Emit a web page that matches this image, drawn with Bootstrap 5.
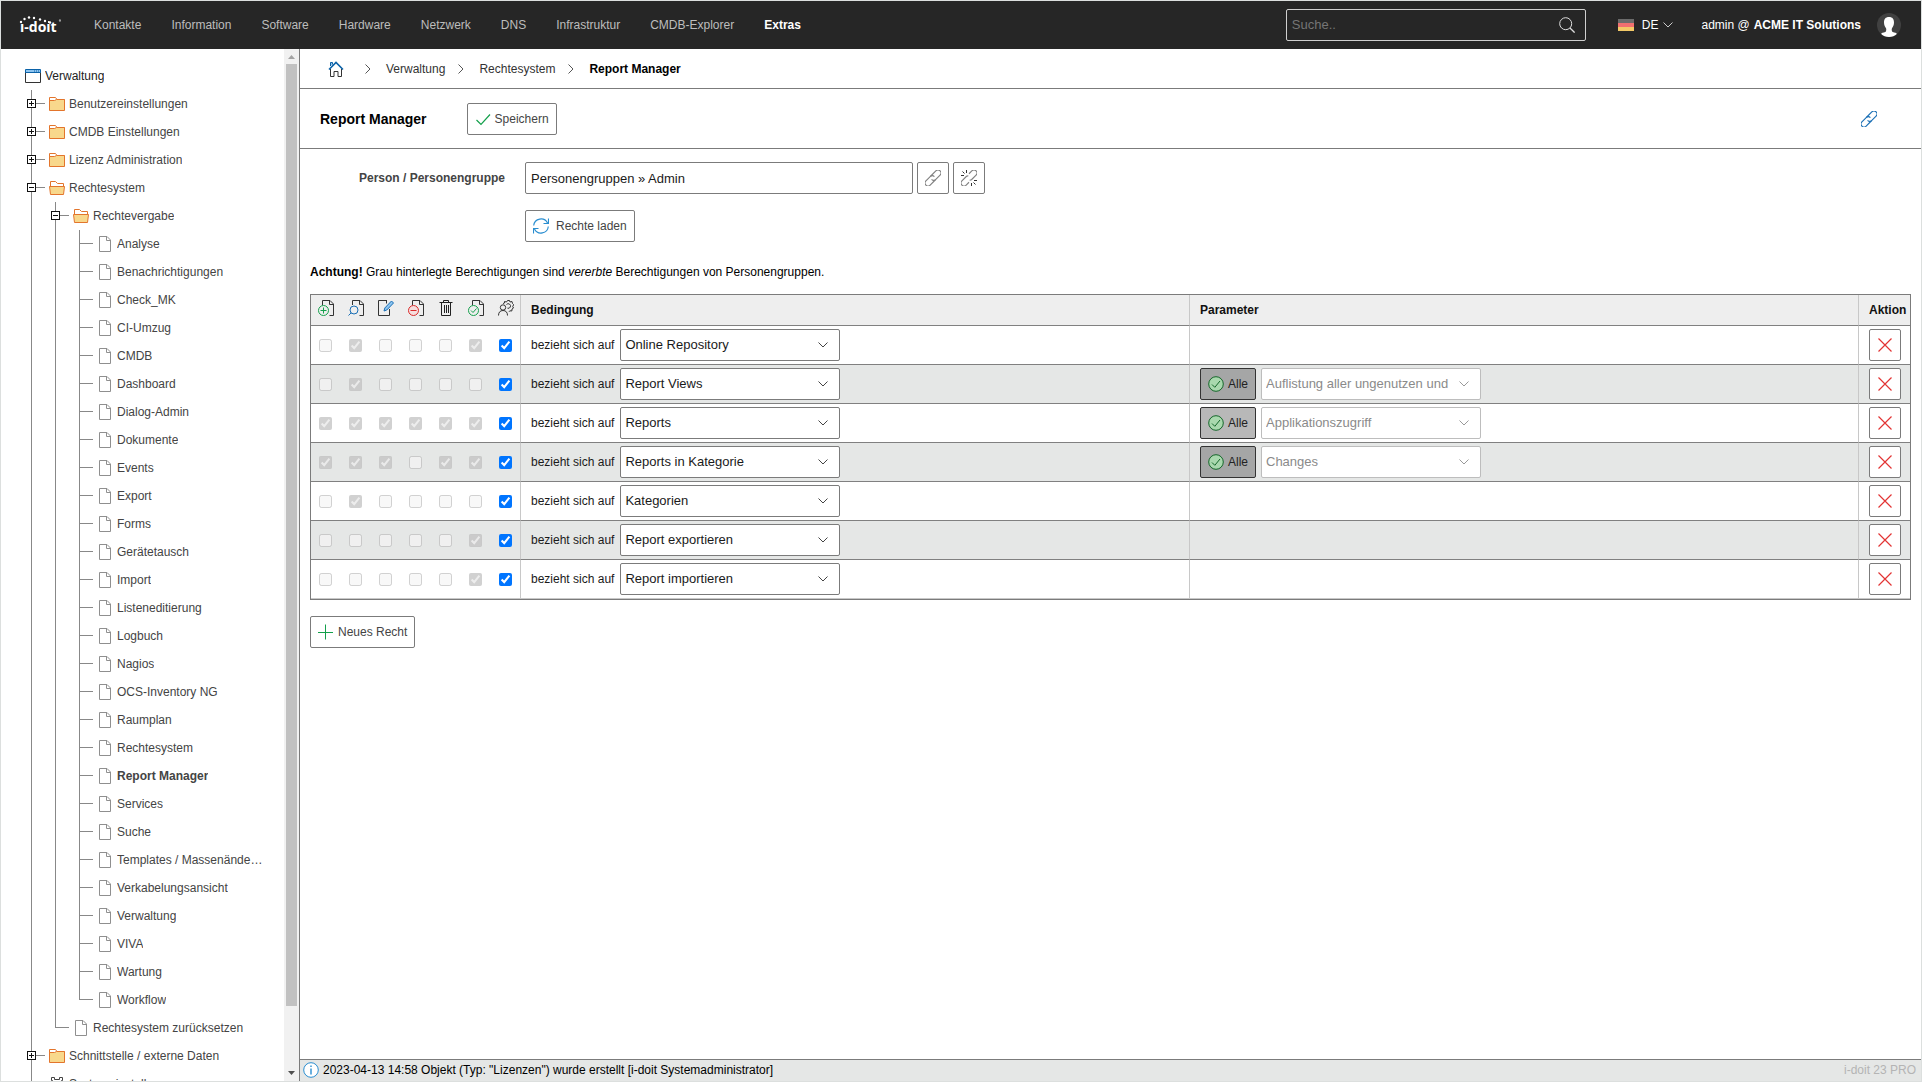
<!DOCTYPE html>
<html lang="de">
<head>
<meta charset="utf-8">
<meta name="viewport" content="width=device-width, initial-scale=1">
<title>i-doit – Report Manager</title>
<link href="https://cdn.jsdelivr.net/npm/bootstrap@5.3.0/dist/css/bootstrap.min.css" rel="stylesheet">
<style>
:root{--line:#7b7b7b;--soft:#c8c8c8}
body{font-family:"Liberation Sans",Arial,sans-serif;font-size:12px;line-height:16px;color:#1a1a1a;border:1px solid #dcdfde}
a{color:inherit;text-decoration:none}
svg{flex:none;display:block;fill:none}
.topbar{height:48px;background:#262626;color:#bdbdbd}
.topbar .nav-link{padding:16px 15px;color:#bdbdbd}
.topbar .nav-link.active{color:#fff;font-weight:700}
.brand{padding-left:14px;width:78px}
.searchbox{width:300px;height:32px;border:1px solid #d0d0d0;border-radius:2px;padding:0 10px 0 5px}
.searchbox input{background:none;border:0;outline:0;padding:0;color:#fff;font-size:13px}
.searchbox input::placeholder{color:#757575}
.bare{background:none;border:0;padding:0;color:inherit}
.lang{margin-left:32px;color:#fff}
.account{margin:0 20px 0 27px;color:#fff}
.sidebar{width:299px;border-right:1px solid var(--line)}
.tree{padding:13px 18px 0 24px;color:#444;white-space:nowrap}
.tree ul{list-style:none;margin:0;padding:0}
.tree ul ul{padding-left:24px}
.tree li{background:linear-gradient(#888,#888) 6px 0/1px 100% no-repeat}
.tree ul ul>li:last-child{background-size:1px 14px}
.node{height:28px;display:flex;align-items:center;gap:4px;min-width:0}
.node>a{overflow:hidden;text-overflow:ellipsis}
.node>svg{margin-top:-1px}
.root{color:#222}
.joint{width:24px;height:28px;margin-right:-4px;flex:none;background:linear-gradient(#888,#888) 7px 13px/13px 1px no-repeat;padding:9px 0 0 2px}
.toggle{display:block;width:9px;height:9px;border:1px solid #111;padding:0;background:linear-gradient(#111,#111) center/5px 1px no-repeat,#fff}
.plus{background:linear-gradient(#111,#111) center/5px 1px no-repeat,linear-gradient(#111,#111) center/1px 5px no-repeat,#fff}
.scroller{width:15px;background:#f1f1f1;padding:0 2px}
.scroller svg{height:15px}
.thumb{background:#c1c1c1;flex:94 0 0}
.rest{flex:6 0 0}
.crumbs{height:40px;padding-left:28px;border-bottom:1px solid var(--line);color:#333}
.step{margin:0 8px 0 10px}
.titlebar{height:60px;padding:0 44px 0 20px;border-bottom:1px solid var(--line)}
.titlebar h1{font-size:14px;font-weight:700;margin:0 40px 0 0;line-height:20px;color:#000}
.permalink{color:#1a6fb5}
.page{padding:13px 10px 0}
.tool{height:32px;border:1px solid var(--line);border-radius:2px;background:#fff;color:#444;font-size:12px;padding:0 7px;display:inline-flex;align-items:center;gap:4px}
.square{width:32px;padding:0;justify-content:center;color:#808080}
.wide{gap:7px}
.all{background:rgba(0,0,0,.28);border-color:#333;color:#222;width:56px}
.person-label{width:195px;margin-right:20px;text-align:right;font-weight:700;color:#444}
.person{width:388px;height:32px;border-color:var(--line);border-radius:2px;padding:0 5px;font-size:13px;color:#1a1a1a}
.hint{margin:22px 0 14px}
.relates{margin-right:6px}
.params{gap:5px}
.pick{width:220px;height:32px;border:1px solid var(--line);border-radius:2px;padding:0 30px 0 4px;font-size:13px;color:#1a1a1a;background-color:#fff;background-size:10px 6px;background-position:right 11px center;background-image:url("data:image/svg+xml,%3Csvg xmlns='http://www.w3.org/2000/svg' viewBox='0 0 10 6'%3E%3Cpath d='M.5.5 5 5 9.500.5' fill='none' stroke='%23444'/%3E%3C/svg%3E")}
.pick:disabled{color:#8a8a8a;border-color:#bdbdbd;background-color:#fff;opacity:1;background-image:url("data:image/svg+xml,%3Csvg xmlns='http://www.w3.org/2000/svg' viewBox='0 0 10 6'%3E%3Cpath d='M.5.5 5 5 9.500.5' fill='none' stroke='%23999'/%3E%3C/svg%3E")}
.rights{table-layout:fixed;width:100%;border:1px solid var(--line);border-collapse:separate;border-spacing:0}
.rights th,.rights td{height:39px;padding:0 10px;border-bottom:1px solid #808080;border-right:1px solid var(--soft);vertical-align:middle}
.rights th{height:31px;background:#eee;white-space:nowrap;color:#111}
.rights th:last-child,.rights td:last-child{border-right:0;padding-right:0}
.rights tbody tr:nth-child(even){background:#e5e7e6}
.rights tbody tr:last-child td{border-bottom-color:var(--soft)}
.flags{width:210px}
.act{width:51px}
.rights .boxes{padding:0 0 0 8px}
.rights .icons{padding:0 0 4px 7px}
.boxes div{display:flex;gap:17px}
.icons div{display:flex;gap:14px}
.boxes input{width:13px;height:13px;margin:0}
.statusbar{height:22px;border-top:1px solid var(--line);background:#e5e7e6;padding:0 5px 2px 3px}
.version{color:#b4b4b4}
</style>
</head>
<body class="vh-100 d-flex flex-column overflow-hidden">
<svg width="0" height="0" class="position-absolute" aria-hidden="true">
<symbol id="folder" viewBox="0 0 16 14"><path d="M.5 4V.5h6L8 2.500H15.500" fill="#fff" stroke="#e3752c"/><path d="M.5 3.500h5L7.500 2.500h8v11H.5z" fill="#f8d88c" stroke="#e3752c"/></symbol>
<symbol id="folder-open" viewBox="0 0 16 14"><path d="M1.500 6V.5h5L8.500 2.500h6V6" fill="#fff" stroke="#e3752c"/><path d="M.5 5.500h15l-1 8h-13z" fill="#f8d88c" stroke="#e3752c"/></symbol>
<symbol id="doc" viewBox="0 0 16 16"><path d="M2.500.5H10l3.500 3.500v11.500h-11zM9.500.5v4h4" fill="#fff" stroke="#8f8f8f"/></symbol>
<symbol id="sheet" viewBox="0 0 16 16"><path d="M4.500 5V.5H12l3.500 3.500v11.500h-4M11.500.5v4h4" stroke="#333"/></symbol>
<symbol id="chev" viewBox="0 0 16 16"><path d="M5.500 3.500 10 8l-4.500 4.500" stroke="#555"/></symbol>
<symbol id="cross" viewBox="0 0 16 16"><path d="M1.500 1.500l13 13M14.500 1.500l-13 13" stroke="#e23434" stroke-width="1.200"/></symbol>
<symbol id="okay" viewBox="0 0 16 16"><circle cx="8" cy="8" r="7.300" fill="#a9d8ae" stroke="#15672a"/><path d="M4 8.500l2.800 2.800L12 5" stroke="#15672a"/></symbol>
<symbol id="link" viewBox="0 0 16 16"><g stroke="currentColor" stroke-width="1.150" transform="rotate(-45 8 8)"><path d="M8.500 11H1A3 3 0 0 1-2 8 3 3 0 0 1 1 5H7A3 3 0 0 1 10 8"/><path d="M6 8A3 3 0 0 0 9 11H15A3 3 0 0 0 18 8 3 3 0 0 0 15 5H7.500"/></g></symbol>
</svg>

<header class="topbar d-flex align-items-center flex-shrink-0">
<a href="#" class="brand" aria-label="i-doit"><svg width="46" height="30" viewBox="0 0 46 30"><text x="5" y="22" font-family="Open Sans, sans-serif" font-weight="700" font-size="14" fill="#fff">i-doit</text><path d="M5 9h5v4H5zM28 9h5v4h-5z" fill="#262626"/><g fill="#fff"><circle cx="6" cy="12" r="1.200"/><circle cx="9.500" cy="9" r="1.200"/><circle cx="14" cy="7.500" r="1.200"/><circle cx="19" cy="8" r="1.200"/><circle cx="25" cy="9.500" r="1.200"/><circle cx="30" cy="11" r="1.200"/><circle cx="35" cy="12.500" r="1.200"/></g><circle cx="45" cy="10.500" r="1.200" fill="#999"/></svg></a>
<nav class="nav flex-nowrap">
<a class="nav-link" href="#">Kontakte</a><a class="nav-link" href="#">Information</a><a class="nav-link" href="#">Software</a><a class="nav-link" href="#">Hardware</a><a class="nav-link" href="#">Netzwerk</a><a class="nav-link" href="#">DNS</a><a class="nav-link" href="#">Infrastruktur</a><a class="nav-link" href="#">CMDB-Explorer</a><a class="nav-link active" href="#">Extras</a>
</nav>
<form class="searchbox d-flex align-items-center ms-auto">
<input class="flex-fill" type="search" placeholder="Suche.." aria-label="Suche">
<button class="bare" type="button" aria-label="Suchen"><svg width="16" height="16" viewBox="0 0 16 16" stroke="#ddd"><circle cx="6.700" cy="6.700" r="6"/><path d="M11 11l4.600 4.600" stroke-width="1.300"/></svg></button>
</form>
<button class="bare lang d-flex align-items-center" type="button"><svg width="16" height="12" viewBox="0 0 16 12"><path d="M0 0h16v4H0z" fill="#6b6b6b"/><path d="M0 4h16v4H0z" fill="#f07070"/><path d="M0 8h16v4H0z" fill="#f3c967"/></svg><span class="ms-2 me-1">DE</span><svg width="12" height="12" viewBox="0 0 12 12"><path d="M1.500 3.500 6 8l4.500-4.500" stroke="#ccc"/></svg></button>
<a href="#" class="account d-flex align-items-center"><span class="me-1">admin @</span> <b>ACME IT Solutions</b><svg class="ms-3" width="24" height="24" viewBox="0 0 24 24"><circle cx="12" cy="12" r="12" fill="#414141"/><path d="M12 4c3.500 0 5 2.200 5 5.500 0 2.800-1 4.300-1.900 5.500-.8 1.100-.3 3.600.6 4.100 1.900.6 4.100 1 4.100 2C18 23 15 24 12 24s-6-1-7.800-2.900c0-1 2.200-1.400 4.100-2 .9-.5 1.400-3 .6-4.100C8 13.800 7 12.300 7 9.500 7 6.200 8.500 4 12 4z" fill="#fff"/></svg></a>
</header>

<div class="d-flex flex-fill" style="min-height:0">
<aside class="sidebar d-flex flex-shrink-0 overflow-hidden">
<nav class="tree flex-fill overflow-hidden" aria-label="Verwaltung">
<div class="node root"><svg width="16" height="14" viewBox="0 0 16 14"><path d="M.5 3v10.500h15V3" stroke="#333"/><path d="M.5.500h15v3H.5z" fill="#8cc4f0" stroke="#0b62a8"/><path d="M9.500 1.500v1M11.500 1.500v1M13.500 1.500v1" stroke="#0b62a8"/></svg><a href="#">Verwaltung</a></div>
<ul>
<li><div class="node"><span class="joint"><button class="toggle plus" aria-label="Öffnen"></button></span><svg width="16" height="14"><use href="#folder"/></svg><a href="#">Benutzereinstellungen</a></div></li>
<li><div class="node"><span class="joint"><button class="toggle plus" aria-label="Öffnen"></button></span><svg width="16" height="14"><use href="#folder"/></svg><a href="#">CMDB Einstellungen</a></div></li>
<li><div class="node"><span class="joint"><button class="toggle plus" aria-label="Öffnen"></button></span><svg width="16" height="14"><use href="#folder"/></svg><a href="#">Lizenz Administration</a></div></li>
<li><div class="node"><span class="joint"><button class="toggle" aria-label="Schließen"></button></span><svg width="16" height="14"><use href="#folder-open"/></svg><a href="#">Rechtesystem</a></div>
<ul>
<li><div class="node"><span class="joint"><button class="toggle" aria-label="Schließen"></button></span><svg width="16" height="14"><use href="#folder-open"/></svg><a href="#">Rechtevergabe</a></div>
<ul>
<li><div class="node"><span class="joint"></span><svg width="16" height="16"><use href="#doc"/></svg><a href="#">Analyse</a></div></li>
<li><div class="node"><span class="joint"></span><svg width="16" height="16"><use href="#doc"/></svg><a href="#">Benachrichtigungen</a></div></li>
<li><div class="node"><span class="joint"></span><svg width="16" height="16"><use href="#doc"/></svg><a href="#">Check_MK</a></div></li>
<li><div class="node"><span class="joint"></span><svg width="16" height="16"><use href="#doc"/></svg><a href="#">CI-Umzug</a></div></li>
<li><div class="node"><span class="joint"></span><svg width="16" height="16"><use href="#doc"/></svg><a href="#">CMDB</a></div></li>
<li><div class="node"><span class="joint"></span><svg width="16" height="16"><use href="#doc"/></svg><a href="#">Dashboard</a></div></li>
<li><div class="node"><span class="joint"></span><svg width="16" height="16"><use href="#doc"/></svg><a href="#">Dialog-Admin</a></div></li>
<li><div class="node"><span class="joint"></span><svg width="16" height="16"><use href="#doc"/></svg><a href="#">Dokumente</a></div></li>
<li><div class="node"><span class="joint"></span><svg width="16" height="16"><use href="#doc"/></svg><a href="#">Events</a></div></li>
<li><div class="node"><span class="joint"></span><svg width="16" height="16"><use href="#doc"/></svg><a href="#">Export</a></div></li>
<li><div class="node"><span class="joint"></span><svg width="16" height="16"><use href="#doc"/></svg><a href="#">Forms</a></div></li>
<li><div class="node"><span class="joint"></span><svg width="16" height="16"><use href="#doc"/></svg><a href="#">Gerätetausch</a></div></li>
<li><div class="node"><span class="joint"></span><svg width="16" height="16"><use href="#doc"/></svg><a href="#">Import</a></div></li>
<li><div class="node"><span class="joint"></span><svg width="16" height="16"><use href="#doc"/></svg><a href="#">Listeneditierung</a></div></li>
<li><div class="node"><span class="joint"></span><svg width="16" height="16"><use href="#doc"/></svg><a href="#">Logbuch</a></div></li>
<li><div class="node"><span class="joint"></span><svg width="16" height="16"><use href="#doc"/></svg><a href="#">Nagios</a></div></li>
<li><div class="node"><span class="joint"></span><svg width="16" height="16"><use href="#doc"/></svg><a href="#">OCS-Inventory NG</a></div></li>
<li><div class="node"><span class="joint"></span><svg width="16" height="16"><use href="#doc"/></svg><a href="#">Raumplan</a></div></li>
<li><div class="node"><span class="joint"></span><svg width="16" height="16"><use href="#doc"/></svg><a href="#">Rechtesystem</a></div></li>
<li><div class="node"><span class="joint"></span><svg width="16" height="16"><use href="#doc"/></svg><a href="#" class="fw-bold">Report Manager</a></div></li>
<li><div class="node"><span class="joint"></span><svg width="16" height="16"><use href="#doc"/></svg><a href="#">Services</a></div></li>
<li><div class="node"><span class="joint"></span><svg width="16" height="16"><use href="#doc"/></svg><a href="#">Suche</a></div></li>
<li><div class="node"><span class="joint"></span><svg width="16" height="16"><use href="#doc"/></svg><a href="#">Templates / Massenände…</a></div></li>
<li><div class="node"><span class="joint"></span><svg width="16" height="16"><use href="#doc"/></svg><a href="#">Verkabelungsansicht</a></div></li>
<li><div class="node"><span class="joint"></span><svg width="16" height="16"><use href="#doc"/></svg><a href="#">Verwaltung</a></div></li>
<li><div class="node"><span class="joint"></span><svg width="16" height="16"><use href="#doc"/></svg><a href="#">VIVA</a></div></li>
<li><div class="node"><span class="joint"></span><svg width="16" height="16"><use href="#doc"/></svg><a href="#">Wartung</a></div></li>
<li><div class="node"><span class="joint"></span><svg width="16" height="16"><use href="#doc"/></svg><a href="#">Workflow</a></div></li>
</ul></li>
<li><div class="node"><span class="joint"></span><svg width="16" height="16"><use href="#doc"/></svg><a href="#">Rechtesystem zurücksetzen</a></div></li>
</ul></li>
<li><div class="node"><span class="joint"><button class="toggle plus" aria-label="Öffnen"></button></span><svg width="16" height="14"><use href="#folder"/></svg><a href="#">Schnittstelle / externe Daten</a></div></li>
<li><div class="node"><span class="joint"></span><svg width="16" height="14" viewBox="0 0 16 14" stroke="#444"><path d="M2.500.500h3v2h5v-2h3v3h-1v7h1v3h-3v-2h-5v2h-3v-3h1v-7h-1z"/><circle cx="8" cy="7" r="2"/></svg><a href="#">Systemeinstellungen</a></div></li>
</ul>
</nav>
<div class="scroller d-flex flex-column flex-shrink-0" aria-hidden="true">
<svg width="11" viewBox="0 0 11 15"><path d="M2 10h7L5.500 6z" fill="#a3a3a3"/></svg>
<div class="thumb"></div><div class="rest"></div>
<svg width="11" viewBox="0 0 11 15"><path d="M2 5h7L5.500 9z" fill="#505050"/></svg>
</div>
</aside>

<div class="flex-fill d-flex flex-column">
<nav class="crumbs d-flex align-items-center" aria-label="Pfad">
<a href="#" class="me-3" aria-label="Start"><svg width="16" height="16" viewBox="0 0 16 16"><path d="M2.500 8v7.500h3.500v-5h4v5h3.500V8" stroke="#333"/><path d="M2.500 5V1.500h2v2" stroke="#0b62a8" fill="#8cc4f0"/><path d="M1 8.500 8 1.500l7 7" stroke="#0b62a8" stroke-width="1.600"/></svg></a>
<svg width="16" height="16"><use href="#chev"/></svg>
<a href="#" class="step">Verwaltung</a>
<svg width="16" height="16"><use href="#chev"/></svg>
<a href="#" class="step">Rechtesystem</a>
<svg width="16" height="16"><use href="#chev"/></svg>
<b class="step text-black">Report Manager</b>
</nav>
<div class="titlebar d-flex align-items-center">
<h1>Report Manager</h1>
<button class="tool" type="button"><svg width="16" height="16" viewBox="0 0 16 16"><path d="M1.500 9 6 13.500 15 3.500" stroke="#13a04b" stroke-width="1.200"/></svg>Speichern</button>
<a href="#" class="permalink ms-auto" aria-label="Link"><svg width="16" height="16"><use href="#link"/></svg></a>
</div>
<main class="page flex-fill overflow-hidden">
<div class="d-flex align-items-center">
<label class="person-label" for="person">Person / Personengruppe</label>
<div class="d-flex gap-1">
<input class="form-control person" id="person" value="Personengruppen » Admin">
<button class="tool square" type="button" aria-label="Verknüpfen"><svg width="16" height="16"><use href="#link"/></svg></button>
<button class="tool square" type="button" aria-label="Trennen"><svg width="16" height="16" viewBox="0 0 16 16"><g stroke="#808080" stroke-width="1.150" transform="rotate(-45 8 8)"><path d="M5 11H1A3 3 0 0 1-2 8 3 3 0 0 1 1 5H7.500A3 3 0 0 1 9 6"/><path d="M7 10A3 3 0 0 0 8.500 11H15A3 3 0 0 0 18 8 3 3 0 0 0 15 5H11"/></g><path d="M0 5.500h3M1.500 1.500l2 2M5.500 0v3M16 10.500h-3M14.500 14.500l-2-2M10.500 16v-3" stroke="#333"/></svg></button>
</div>
</div>
<div class="d-flex mt-3">
<span class="person-label"></span>
<button class="tool wide" type="button"><svg width="16" height="16" viewBox="0 0 16 16" stroke="#2a8ed0" stroke-width="1.150"><path d="M.7 7.500A7.300 7.300 0 0 1 14.500 5M15.500.5V5.500H10.500M15.300 8.500A7.300 7.300 0 0 1 1.500 11M.5 15.500V10.500H5.500"/></svg>Rechte laden</button>
</div>
<p class="hint text-black"><b>Achtung!</b> Grau hinterlegte Berechtigungen sind <i>vererbte</i> Berechtigungen von Personengruppen.</p>
<table class="rights">
<thead><tr>
<th class="flags icons"><div>
<svg width="16" height="16"><use href="#sheet"/><g stroke="#14a04c"><circle cx="5.500" cy="10.500" r="5" fill="#eee"/><path d="M5.500 7.500v6M2.500 10.500h6"/></g></svg>
<svg width="16" height="16"><use href="#sheet"/><g stroke="#1a6fb5"><circle cx="6" cy="10" r="4" fill="#eee"/><path d="M3.200 12.800.500 15.500"/></g></svg>
<svg width="16" height="16" viewBox="0 0 16 16"><path d="M9 .5H.500v15h11V9M8.500.5v3" stroke="#333"/><path d="M6 11l.8-3L13.500 1l2 2-6.700 7z" fill="#8cc4f0" stroke="#1a6fb5"/></svg>
<svg width="16" height="16"><use href="#sheet"/><g stroke="#d92b2b"><circle cx="5.500" cy="10.500" r="5" fill="#f6dede"/><path d="M2.500 10.500h6"/></g></svg>
<svg width="16" height="16" viewBox="0 0 16 16" stroke="#222"><path d="M1.500 2.500h13M5.500 2.500v-2h5v2M3.500 2.500v13h9v-13M6.500 5v8M8.500 5v8M10.500 5v8"/></svg>
<svg width="16" height="16"><use href="#sheet"/><g stroke="#14a04c"><circle cx="5.500" cy="10.500" r="5" fill="#eee"/><path d="M3 10.500l2 2 3.500-4"/></g></svg>
<svg width="16" height="16" viewBox="0 0 16 16" stroke="#333"><circle cx="5" cy="7.500" r="2.700"/><path d="M.5 15.500c0-3 1.500-5 4.500-5s4.500 2 4.500 5M5 3.500l1.500-.5V1.500L8.500 2 9.500.5h2L12 2l2-.5.5 2 1.200 1.200-1 1.800.8 1.500-1.500 1-.2 2-2-.2-.8 1"/><path d="M8.500 4.500a2.300 2.300 0 1 1 1 3.700"/></svg>
</div></th>
<th>Bedingung</th><th>Parameter</th><th class="act">Aktion</th></tr></thead>
<tbody>
<tr><td class="boxes"><div><input type="checkbox" disabled aria-label="Anlegen"><input type="checkbox" checked disabled aria-label="Ansehen"><input type="checkbox" disabled aria-label="Bearbeiten"><input type="checkbox" disabled aria-label="Archivieren"><input type="checkbox" disabled aria-label="Löschen"><input type="checkbox" checked disabled aria-label="Ausführen"><input type="checkbox" checked aria-label="Supervisor"></div></td>
<td><div class="d-flex align-items-center"><label class="relates" for="c1">bezieht sich auf</label><select class="form-select pick" id="c1"><option>Online Repository</option></select></div></td><td></td><td><button class="tool square" type="button" aria-label="Entfernen"><svg width="16" height="16"><use href="#cross"/></svg></button></td></tr>
<tr><td class="boxes"><div><input type="checkbox" disabled aria-label="Anlegen"><input type="checkbox" checked disabled aria-label="Ansehen"><input type="checkbox" disabled aria-label="Bearbeiten"><input type="checkbox" disabled aria-label="Archivieren"><input type="checkbox" disabled aria-label="Löschen"><input type="checkbox" disabled aria-label="Ausführen"><input type="checkbox" checked aria-label="Supervisor"></div></td>
<td><div class="d-flex align-items-center"><label class="relates" for="c2">bezieht sich auf</label><select class="form-select pick" id="c2"><option>Report Views</option></select></div></td>
<td><div class="params d-flex"><button class="tool all" type="button"><svg width="16" height="16"><use href="#okay"/></svg>Alle</button><select class="form-select pick" disabled aria-label="Parameter"><option>Auflistung aller ungenutzen und</option></select></div></td><td><button class="tool square" type="button" aria-label="Entfernen"><svg width="16" height="16"><use href="#cross"/></svg></button></td></tr>
<tr><td class="boxes"><div><input type="checkbox" checked disabled aria-label="Anlegen"><input type="checkbox" checked disabled aria-label="Ansehen"><input type="checkbox" checked disabled aria-label="Bearbeiten"><input type="checkbox" checked disabled aria-label="Archivieren"><input type="checkbox" checked disabled aria-label="Löschen"><input type="checkbox" checked disabled aria-label="Ausführen"><input type="checkbox" checked aria-label="Supervisor"></div></td>
<td><div class="d-flex align-items-center"><label class="relates" for="c3">bezieht sich auf</label><select class="form-select pick" id="c3"><option>Reports</option></select></div></td>
<td><div class="params d-flex"><button class="tool all" type="button"><svg width="16" height="16"><use href="#okay"/></svg>Alle</button><select class="form-select pick" disabled aria-label="Parameter"><option>Applikationszugriff</option></select></div></td><td><button class="tool square" type="button" aria-label="Entfernen"><svg width="16" height="16"><use href="#cross"/></svg></button></td></tr>
<tr><td class="boxes"><div><input type="checkbox" checked disabled aria-label="Anlegen"><input type="checkbox" checked disabled aria-label="Ansehen"><input type="checkbox" checked disabled aria-label="Bearbeiten"><input type="checkbox" disabled aria-label="Archivieren"><input type="checkbox" checked disabled aria-label="Löschen"><input type="checkbox" checked disabled aria-label="Ausführen"><input type="checkbox" checked aria-label="Supervisor"></div></td>
<td><div class="d-flex align-items-center"><label class="relates" for="c4">bezieht sich auf</label><select class="form-select pick" id="c4"><option>Reports in Kategorie</option></select></div></td>
<td><div class="params d-flex"><button class="tool all" type="button"><svg width="16" height="16"><use href="#okay"/></svg>Alle</button><select class="form-select pick" disabled aria-label="Parameter"><option>Changes</option></select></div></td><td><button class="tool square" type="button" aria-label="Entfernen"><svg width="16" height="16"><use href="#cross"/></svg></button></td></tr>
<tr><td class="boxes"><div><input type="checkbox" disabled aria-label="Anlegen"><input type="checkbox" checked disabled aria-label="Ansehen"><input type="checkbox" disabled aria-label="Bearbeiten"><input type="checkbox" disabled aria-label="Archivieren"><input type="checkbox" disabled aria-label="Löschen"><input type="checkbox" disabled aria-label="Ausführen"><input type="checkbox" checked aria-label="Supervisor"></div></td>
<td><div class="d-flex align-items-center"><label class="relates" for="c5">bezieht sich auf</label><select class="form-select pick" id="c5"><option>Kategorien</option></select></div></td><td></td><td><button class="tool square" type="button" aria-label="Entfernen"><svg width="16" height="16"><use href="#cross"/></svg></button></td></tr>
<tr><td class="boxes"><div><input type="checkbox" disabled aria-label="Anlegen"><input type="checkbox" disabled aria-label="Ansehen"><input type="checkbox" disabled aria-label="Bearbeiten"><input type="checkbox" disabled aria-label="Archivieren"><input type="checkbox" disabled aria-label="Löschen"><input type="checkbox" checked disabled aria-label="Ausführen"><input type="checkbox" checked aria-label="Supervisor"></div></td>
<td><div class="d-flex align-items-center"><label class="relates" for="c6">bezieht sich auf</label><select class="form-select pick" id="c6"><option>Report exportieren</option></select></div></td><td></td><td><button class="tool square" type="button" aria-label="Entfernen"><svg width="16" height="16"><use href="#cross"/></svg></button></td></tr>
<tr><td class="boxes"><div><input type="checkbox" disabled aria-label="Anlegen"><input type="checkbox" disabled aria-label="Ansehen"><input type="checkbox" disabled aria-label="Bearbeiten"><input type="checkbox" disabled aria-label="Archivieren"><input type="checkbox" disabled aria-label="Löschen"><input type="checkbox" checked disabled aria-label="Ausführen"><input type="checkbox" checked aria-label="Supervisor"></div></td>
<td><div class="d-flex align-items-center"><label class="relates" for="c7">bezieht sich auf</label><select class="form-select pick" id="c7"><option>Report importieren</option></select></div></td><td></td><td><button class="tool square" type="button" aria-label="Entfernen"><svg width="16" height="16"><use href="#cross"/></svg></button></td></tr>
</tbody>
</table>
<button class="tool mt-3" type="button"><svg width="16" height="16" viewBox="0 0 16 16"><path d="M7.500.5v15M0 8.500h15" stroke="#13a04b"/></svg>Neues Recht</button>
</main>
<footer class="statusbar d-flex align-items-center justify-content-between text-black">
<span class="d-flex align-items-center gap-1"><svg width="16" height="16" viewBox="0 0 16 16"><circle cx="8" cy="8" r="7.300" fill="#fff" stroke="#2a8ed0"/><path d="M8 6.500v6M8 3.500v1.500" stroke="#2a8ed0" stroke-width="1.400"/></svg>2023-04-13 14:58 Objekt (Typ: "Lizenzen") wurde erstellt [i-doit Systemadministrator]</span>
<span class="version">i-doit 23 PRO</span>
</footer>
</div>
</div>
<script src="https://cdn.jsdelivr.net/npm/bootstrap@5.3.0/dist/js/bootstrap.bundle.min.js"></script>
</body>
</html>
